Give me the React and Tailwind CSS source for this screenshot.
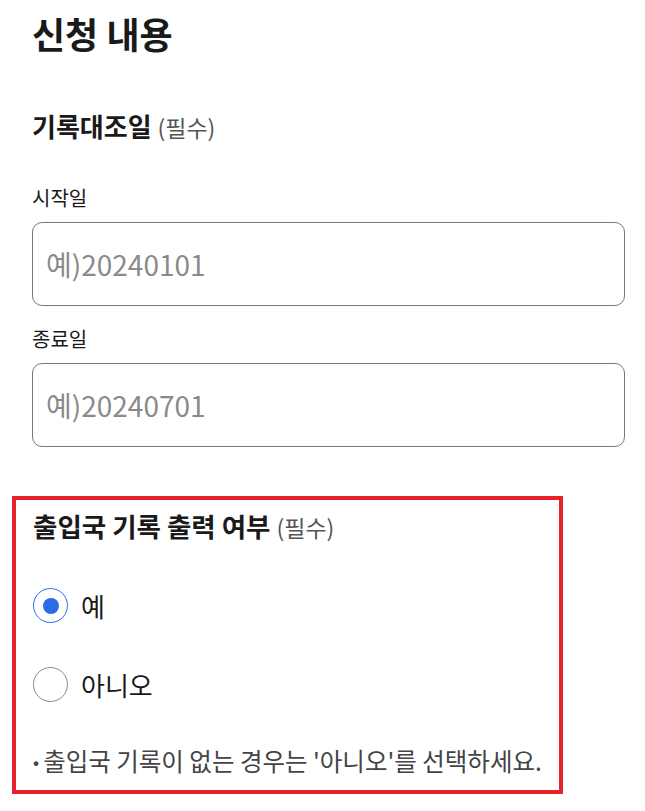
import React, { useState } from "react";

const FONT = { fontFamily: '"Noto Sans CJK KR", "Noto Sans", sans-serif' };

function DateField({ label, placeholder }) {
  return (
    <div className="flex flex-col">
      <label className="text-[20px] leading-[28px] text-[#1a1a1a]">{label}</label>
      <input
        type="text"
        placeholder={placeholder}
        className="mt-[10px] h-[84px] w-full rounded-[10px] border border-[#777] px-[13px] text-[28px] text-[#1a1a1a] placeholder:text-[#8a8a8a] outline-none"
      />
    </div>
  );
}

function Radio({ checked, label, onClick }) {
  return (
    <button type="button" onClick={onClick} className="flex items-center gap-[13px] text-left">
      <span
        className={
          checked
            ? "flex h-[35px] w-[35px] items-center justify-center rounded-full border border-[#2f6fe6]"
            : "flex h-[35px] w-[35px] items-center justify-center rounded-full border border-[#8a8a8a]"
        }
      >
        {checked && <span className="h-[16px] w-[16px] rounded-full bg-[#2a6be6]" />}
      </span>
      <span className="text-[26px] leading-[34px] text-[#1a1a1a]">{label}</span>
    </button>
  );
}

export default function App() {
  const [printRecord, setPrintRecord] = useState("yes");

  return (
    <div className="bg-white pl-[32px] pr-[20px] pt-[8px] pb-[16px]" style={FONT}>
      <h1 className="text-[36px] font-bold leading-[50px] text-[#1a1a1a]">신청 내용</h1>

      <h2 className="mt-[50px] text-[26px] font-bold leading-[36px] text-[#1a1a1a]">
        기록대조일 <span className="text-[23px] font-normal text-[#555]">(필수)</span>
      </h2>

      <div className="mt-[39px] flex flex-col gap-[19px]">
        <DateField label="시작일" placeholder="예)20240101" />
        <DateField label="종료일" placeholder="예)20240701" />
      </div>

      <section className="-ml-[20px] mt-[49px] w-[551px] border-4 border-[#e8202a] px-[17px] pt-[8px] pb-[13px]">
        <h2 className="text-[26.5px] font-bold leading-[36px] text-[#1a1a1a]">
          출입국 기록 출력 여부 <span className="text-[23px] font-normal text-[#555]">(필수)</span>
        </h2>
        <div className="mt-[43px] flex flex-col gap-[44px]">
          <Radio checked={printRecord === "yes"} label="예" onClick={() => setPrintRecord("yes")} />
          <Radio checked={printRecord === "no"} label="아니오" onClick={() => setPrintRecord("no")} />
        </div>
        <p className="mt-[43px] flex items-start text-[24.5px] leading-[32px] text-[#444]">
          <span className="mr-[4px] text-[18px] leading-[32px]">•</span>
          출입국 기록이 없는 경우는 '아니오'를 선택하세요.
        </p>
      </section>
    </div>
  );
}
